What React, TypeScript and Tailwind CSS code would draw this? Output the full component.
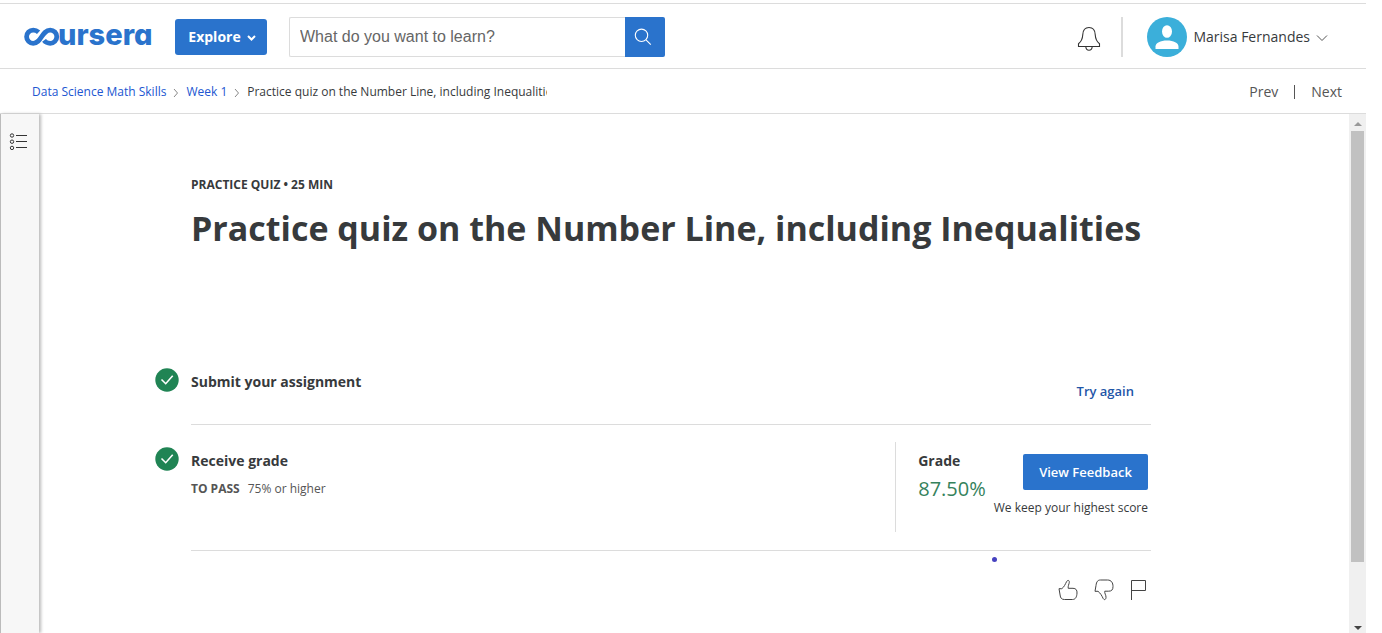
import React from "react";

const Check = () => (
  <svg viewBox="0 0 24 24" className="size-6 shrink-0" aria-hidden="true">
    <circle cx="12" cy="12" r="11.7" fill="#208454" />
    <path d="M6.5 11.5l4.2 4.2 7-8" fill="none" stroke="#fff" strokeWidth="1.6" />
  </svg>
);

const Crumb = () => (
  <svg viewBox="0 0 6 10" className="mx-[7px] mt-0.5 h-2.5 w-1.5 shrink-0" fill="none" stroke="#888" aria-hidden="true">
    <path d="M1 1l3.5 4L1 9" />
  </svg>
);

const Logo = () => (
  <a href="#home" aria-label="coursera" className="block">
    <svg viewBox="0 0 128 28" className="h-7 w-32 overflow-visible" aria-hidden="true">
      <path
        d="M14.6 9.2C13.2 7.9 11.4 7.1 9.2 7.1A6.6 6.6 0 0 0 9.2 20.3C17.6 20.3 17.6 7.1 26.2 7.1A6.6 6.6 0 0 1 26.2 20.3C23.4 20.3 21.4 19.2 20 17.4"
        fill="none"
        stroke="#2a73cc"
        strokeWidth="4.8"
      />
      <text
        x="34"
        y="22"
        fontWeight="800"
        fontSize="29"
        fill="#2a73cc"
        className="font-['Inter',sans-serif] [font-feature-settings:'cv11']"
      >
        ursera
      </text>
    </svg>
  </a>
);

export default function App() {
  return (
    <div className="flex h-screen flex-col bg-white pr-4 font-['Open_Sans',sans-serif] text-[#373a3c]">
      <header className="mt-[3px] flex h-[66px] shrink-0 items-center border-y border-[#dcdcdc] pt-0.5 pl-6">
        <Logo />
        <button className="ml-[23px] flex h-9 w-[92px] items-center justify-center gap-1.5 rounded-[3px] bg-[#2a73cc] pl-0.5 text-sm font-bold text-white">
          Explore
          <svg viewBox="0 0 9 6" className="mt-0.5 h-1.5 w-[9px]" fill="none" stroke="#fff" strokeWidth="2" aria-hidden="true">
            <path d="M1 1l3.5 3.5L8 1" />
          </svg>
        </button>
        <form className="ml-[22px] flex h-10 w-[376px]" role="search">
          <input
            type="text"
            aria-label="Search"
            placeholder="What do you want to learn?"
            className="min-w-0 flex-1 rounded-l-xs border border-r-0 border-[#dcdcdc] px-2.5 font-['Liberation_Sans',sans-serif] text-base placeholder:text-[#666]"
          />
          <button type="button" aria-label="Submit search" className="flex w-10 items-center justify-center rounded-r-xs bg-[#2a73cc] pr-1">
            <svg viewBox="0 0 18 18" className="size-[18px]" fill="none" stroke="#fff" strokeWidth="1.1" aria-hidden="true">
              <circle cx="7.5" cy="7.3" r="6.2" />
              <path d="M12 11.8l4.8 4.8" />
            </svg>
          </button>
        </form>
        <div className="ml-auto flex items-center pr-[38px]">
          <button aria-label="Notifications">
            <svg viewBox="0 0 24 26" className="mt-1 h-[26px] w-6" fill="none" stroke="#333" strokeWidth="1.1" aria-hidden="true">
              <path d="M1.5 20.5v-2.8C4.5 15.5 5.5 13.5 5.8 8.5C6 4 8.5 1.5 12 1.5S18 4 18.2 8.5c.3 5 1.3 7 4.3 9.2v2.8z" />
              <path d="M8.8 20.8c.2 2.2 1.4 3.4 3.2 3.4s3-1.2 3.2-3.4" />
            </svg>
          </button>
          <div className="ml-5 h-10 w-0.5 bg-[#dcdcdc]" />
          <button className="ml-6 flex items-center text-sm">
            <svg viewBox="0 0 40 40" className="mr-1.5 size-10" aria-hidden="true">
              <circle cx="20" cy="20" r="20" fill="#3bafda" />
              <ellipse cx="20" cy="14.5" rx="5" ry="6.3" fill="#fff" />
              <path d="M8.5 32v-2.5c0-3.5 5-6 11.5-6s11.5 2.5 11.5 6V32z" fill="#fff" />
            </svg>
            Marisa Fernandes
            <svg viewBox="0 0 12 8" className="mt-0.5 ml-1.5 h-2 w-3" fill="none" stroke="#555" aria-hidden="true">
              <path d="M1 1.5l5 5 5-5" />
            </svg>
          </button>
        </div>
      </header>

      <div className="flex h-[45px] shrink-0 items-center justify-between border-b border-[#dcdcdc] pt-0.5 pr-6 pl-8">
        <nav aria-label="Breadcrumb" className="flex w-[515px] items-center overflow-hidden text-xs whitespace-nowrap">
          <a href="#course" className="text-[#2156d1]">Data Science Math Skills</a>
          <Crumb />
          <a href="#week" className="text-[#2156d1]">Week 1</a>
          <Crumb />
          <span className="min-w-0 overflow-hidden">Practice quiz on the Number Line, including Inequalities</span>
        </nav>
        <nav aria-label="Items" className="flex items-center text-sm text-[#555]">
          <a href="#prev">Prev</a>
          <span className="mx-4 h-3.5 w-px bg-[#555]" />
          <a href="#next">Next</a>
        </nav>
      </div>

      <div className="flex min-h-0 flex-1">
        <aside className="z-10 w-[39px] shrink-0 border-l border-[#bbb] bg-[#f7f7f7] pt-[19px] pl-2 shadow-[2px_0_3px_#bbb]">
          <button aria-label="Open course outline" className="block">
            <svg viewBox="0 0 20 18" className="h-[18px] w-5" fill="none" stroke="#333" aria-hidden="true">
              <circle cx="3" cy="2.5" r="1.7" />
              <circle cx="3" cy="8.7" r="1.7" />
              <circle cx="3" cy="14.9" r="1.7" />
              <path d="M7 2.5h11M7 8.5h11M7 14.5h11" />
            </svg>
          </button>
        </aside>

        <main className="min-w-0 flex-1 overflow-hidden pr-[198px] pl-[152px]">
          <p className="mt-[62px] text-xs leading-[18px] font-bold">PRACTICE QUIZ • 25 MIN</p>
          <h1 className="mt-[11px] text-[34px] leading-[46px] font-bold whitespace-nowrap">
            Practice quiz on the Number Line, including Inequalities
          </h1>

          <section className="mt-[117px] flex h-[57px] border-b border-[#dcdcdc]">
            <div className="-ml-9 flex items-start gap-3">
              <Check />
              <h2 className="mt-1 text-sm leading-5 font-bold">Submit your assignment</h2>
            </div>
            <a href="#retry" className="mt-[13px] mr-[17px] ml-auto text-[13px] leading-5 font-semibold text-[#1f56a8]">Try again</a>
          </section>

          <section className="flex h-[126px] border-b border-[#dcdcdc]">
            <div className="-ml-9 flex items-start gap-3 pt-[22px]">
              <Check />
              <div>
                <h2 className="mt-1 text-sm leading-5 font-bold">Receive grade</h2>
                <p className="mt-2 text-xs leading-5 text-[#555]">
                  <b className="mr-2 font-bold">TO PASS</b>75% or higher
                </p>
              </div>
            </div>
            <div className="mt-[17px] mr-[3px] ml-auto flex h-[90px] border-l border-[#dcdcdc] pl-[22px]">
              <div className="mt-[9px]">
                <h2 className="text-sm leading-5 font-bold">Grade</h2>
                <p className="text-xl leading-9 text-[#35825c]">87.50%</p>
              </div>
              <div className="mt-3 ml-2 flex flex-col items-end">
                <button className="h-9 w-[125px] rounded-xs bg-[#2a73cc] pt-0.5 text-[13px] font-semibold text-white">View Feedback</button>
                <p className="mt-2 text-xs leading-5">We keep your highest score</p>
              </div>
            </div>
          </section>

          <div className="flex flex-col items-end">
            <span className="mt-1.5 mr-[154px] size-[5px] rounded-full bg-[#4642c0]" />
            <div className="mt-[17px] mr-[5px] flex gap-4">
              <button aria-label="Like">
                <svg viewBox="0 0 20 22" className="h-[22px] w-5" fill="none" stroke="#444" aria-hidden="true">
                  <path d="M1 9.7L3.8 9.7C6.2 8 7.2 5.2 8.6 2.6C9.6 .7 11.6 1.2 11.3 3.3C11 5.3 9.8 7.3 10.2 9.3H15C18 9.3 19.2 11.2 19 14C18.8 18 17.5 20.5 14.5 20.5H6.5C3.6 20.5 2.4 19 2.1 16z" />
                </svg>
              </button>
              <button aria-label="Dislike">
                <svg viewBox="0 0 20 22" className="h-[22px] w-5" fill="none" stroke="#444" aria-hidden="true">
                  <path d="M1 12.3L2 6.5C2.5 2.5 3.8 1 6.5 1H13.5C17.5 1 19 4 19 7.5C19 11 17.5 12.2 14.5 12.2H10.8C10.2 14.2 12.2 16 12 18.5C11.8 21 10 21.3 9 19.2C7.8 16.7 6.5 14.2 4 12.3z" />
                </svg>
              </button>
              <button aria-label="Report">
                <svg viewBox="0 0 16 22" className="h-[22px] w-4" fill="none" stroke="#444" aria-hidden="true">
                  <path d="M1.5 21V1.5H15.5V11.5H1.5" />
                </svg>
              </button>
            </div>
          </div>
        </main>

        <div className="flex w-[17px] shrink-0 flex-col items-center bg-[#f0f0f0] py-1.5" aria-hidden="true">
          <svg viewBox="0 0 8 5" className="mt-0.5 mb-1 h-[5px] w-2 shrink-0" fill="#999"><path d="M0 4l4-4 4 4z" /></svg>
          <div className="h-[431px] w-[13px] bg-[#c1c1c1]" />
          <svg viewBox="0 0 8 5" className="mt-auto -mb-1 h-[5px] w-2 shrink-0" fill="#444"><path d="M0 0h8L4 4z" /></svg>
        </div>
      </div>
    </div>
  );
}
